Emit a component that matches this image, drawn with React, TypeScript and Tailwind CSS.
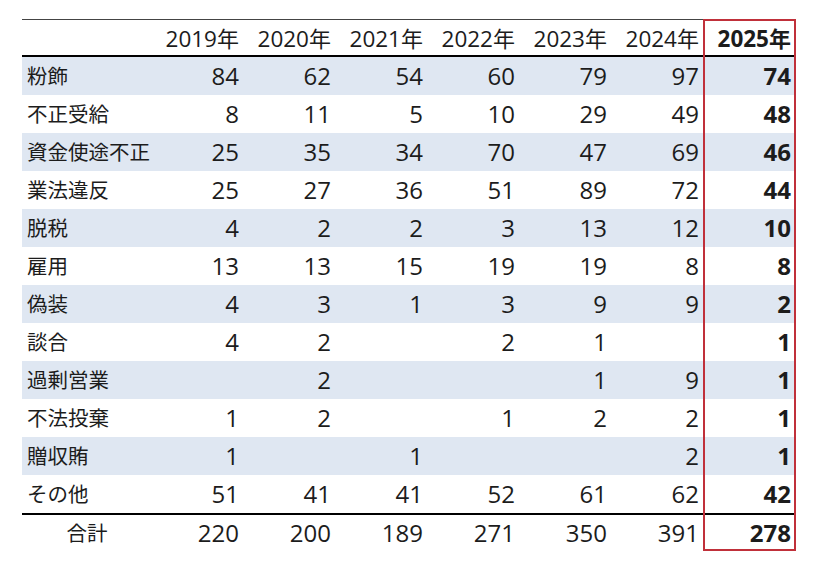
const years = ['2019', '2020', '2021', '2022', '2023', '2024', '2025']

const rows: [string, (number | null)[]][] = [
  ['粉飾', [84, 62, 54, 60, 79, 97, 74]],
  ['不正受給', [8, 11, 5, 10, 29, 49, 48]],
  ['資金使途不正', [25, 35, 34, 70, 47, 69, 46]],
  ['業法違反', [25, 27, 36, 51, 89, 72, 44]],
  ['脱税', [4, 2, 2, 3, 13, 12, 10]],
  ['雇用', [13, 13, 15, 19, 19, 8, 8]],
  ['偽装', [4, 3, 1, 3, 9, 9, 2]],
  ['談合', [4, 2, null, 2, 1, null, 1]],
  ['過剰営業', [null, 2, null, null, 1, 9, 1]],
  ['不法投棄', [1, 2, null, 1, 2, 2, 1]],
  ['贈収賄', [1, null, 1, null, null, 2, 1]],
  ['その他', [51, 41, 41, 52, 61, 62, 42]],
]

const totals = [220, 200, 189, 271, 350, 391, 278]

const grid = 'grid grid-cols-[130px_repeat(7,92px)] items-center'

export default function App() {
  return (
    <div
      className="w-[818px] h-[574px] bg-white text-[#1c1c1c] text-[24px] leading-none"
      style={{ fontFamily: '"Open Sans", "Noto Sans CJK JP", sans-serif' }}
    >
      <div className="relative ml-[22px] pt-[19px] w-[774px]">
        {/* header */}
        <div className={`${grid} h-[38px] border-t-[1.5px] border-t-[#444] border-b-2 border-b-black`}>
          <div />
          {years.map((y, i) => (
            <div key={y} className={`text-right pr-[5px] pt-[3px] text-[22.5px] whitespace-nowrap ${i === 6 ? 'font-bold' : ''}`}>
              {y}<span className="text-[22px]">年</span>
            </div>
          ))}
        </div>

        {/* body */}
        {rows.map(([label, vals], r) => (
          <div key={label} className={`${grid} h-[38px] ${r % 2 === 0 ? 'bg-[#dfe7f2]' : ''}`}>
            <div className="pl-[5px] text-[20.5px] whitespace-nowrap">{label}</div>
            {vals.map((v, i) => (
              <div key={i} className={`text-right pr-[5px] ${i === 6 ? 'font-bold' : ''}`}>{v ?? ''}</div>
            ))}
          </div>
        ))}

        {/* total */}
        <div className={`${grid} h-[38px] border-t-2 border-black`}>
          <div className="text-center text-[20.5px]">合計</div>
          {totals.map((v, i) => (
            <div key={i} className={`text-right pr-[5px] ${i === 6 ? 'font-bold' : ''}`}>{v}</div>
          ))}
        </div>

        {/* highlight for 2025 column */}
        <div className="absolute top-[19px] bottom-0 right-0 w-[93px] border-2 border-[#c0303a] pointer-events-none" />
      </div>
    </div>
  )
}
